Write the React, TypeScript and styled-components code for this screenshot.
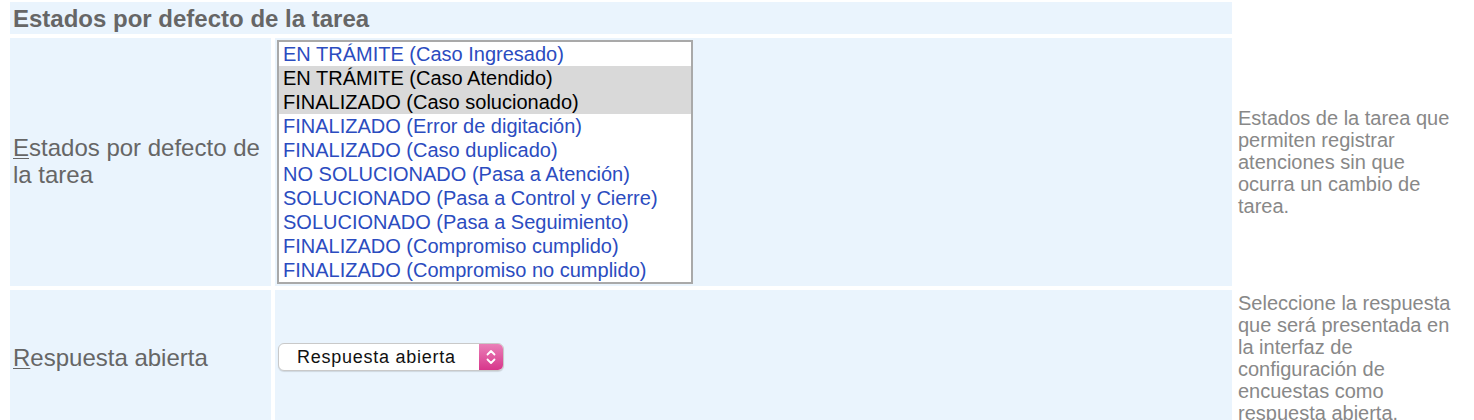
import React from "react";
import styled, { createGlobalStyle } from "styled-components";

const GlobalStyle = createGlobalStyle`
  html, body {
    margin: 0;
    padding: 0;
    background: #ffffff;
    font-family: "Liberation Sans", Arial, Helvetica, sans-serif;
  }
`;

const Form = styled.div`
  display: grid;
  grid-template-columns: 261px 957px 226px;
  grid-template-rows: 32px auto auto;
  column-gap: 4px;
  row-gap: 4px;
  padding: 2px 0 0 10px;
`;

const HeaderCell = styled.div`
  grid-column: 1 / span 2;
  background: #eaf4fd;
  display: flex;
  align-items: center;
  padding: 1px 3px 0;
  font-size: 24px;
  font-weight: bold;
  color: #666666;
`;

const HeaderSpacer = styled.div``;

const LabelCell = styled.label`
  background: #eaf4fd;
  display: flex;
  align-items: center;
  padding: 2px 3px;
  font-size: 24px;
  color: #666666;
  line-height: 1.12;
`;

const AccessKey = styled.span`
  text-decoration: underline;
  text-underline-offset: 2px;
  text-decoration-thickness: 1px;
`;

const FieldCell = styled.div`
  background: #eaf4fd;
  display: flex;
  align-items: center;
  padding: 2px;
`;

const HelpCell = styled.div`
  display: flex;
  align-items: center;
  padding: 2px;
  font-size: 20px;
  color: #888888;
  line-height: 22px;
`;

const ListBox = styled.div`
  width: 412px;
  border: 2px solid #a9a9a9;
  background: #ffffff;
  display: flex;
  flex-direction: column;
`;

const Option = styled.div<{ $selected?: boolean }>`
  height: 24px;
  line-height: 24px;
  padding: 0 4px;
  font-size: 20px;
  white-space: nowrap;
  color: ${(p) => (p.$selected ? "#000000" : "#2b4cc0")};
  background: ${(p) => (p.$selected ? "#d9d9d9" : "transparent")};
`;

const PopupButton = styled.div`
  display: flex;
  align-items: stretch;
  width: 226px;
  height: 28px;
  box-sizing: border-box;
  border: 1px solid #c9c9c9;
  border-radius: 6px;
  background: #ffffff;
  box-shadow: 0 1px 1px rgba(0, 0, 0, 0.12);
  overflow: hidden;
  margin: 0 0 2px 1px;
`;

const PopupLabel = styled.div`
  flex: 1;
  display: flex;
  align-items: center;
  padding-left: 18px;
  font-size: 18px;
  letter-spacing: 0.75px;
  color: #111111;
`;

const PopupArrow = styled.div`
  width: 24px;
  display: flex;
  align-items: center;
  justify-content: center;
  background: linear-gradient(#ea80b8, #d7368b);
`;

const Chevrons = () => (
  <svg width="12" height="18" viewBox="0 0 12 18" fill="none">
    <path d="M2.5 6.5 L6 3 L9.5 6.5" stroke="#ffffff" strokeWidth="1.8" strokeLinecap="round" strokeLinejoin="round" />
    <path d="M2.5 11.5 L6 15 L9.5 11.5" stroke="#ffffff" strokeWidth="1.8" strokeLinecap="round" strokeLinejoin="round" />
  </svg>
);

const estados = [
  { text: "EN TRÁMITE (Caso Ingresado)", selected: false },
  { text: "EN TRÁMITE (Caso Atendido)", selected: true },
  { text: "FINALIZADO (Caso solucionado)", selected: true },
  { text: "FINALIZADO (Error de digitación)", selected: false },
  { text: "FINALIZADO (Caso duplicado)", selected: false },
  { text: "NO SOLUCIONADO (Pasa a Atención)", selected: false },
  { text: "SOLUCIONADO (Pasa a Control y Cierre)", selected: false },
  { text: "SOLUCIONADO (Pasa a Seguimiento)", selected: false },
  { text: "FINALIZADO (Compromiso cumplido)", selected: false },
  { text: "FINALIZADO (Compromiso no cumplido)", selected: false },
];

export default function App() {
  return (
    <>
      <GlobalStyle />
      <Form>
        <HeaderCell>Estados por defecto de la tarea</HeaderCell>
        <HeaderSpacer />

        <LabelCell>
          <span>
            <AccessKey>E</AccessKey>stados por defecto de la tarea
          </span>
        </LabelCell>
        <FieldCell>
          <ListBox role="listbox" aria-multiselectable="true">
            {estados.map((e) => (
              <Option key={e.text} role="option" aria-selected={e.selected} $selected={e.selected}>
                {e.text}
              </Option>
            ))}
          </ListBox>
        </FieldCell>
        <HelpCell>
          Estados de la tarea que permiten registrar atenciones sin que ocurra un cambio de tarea.
        </HelpCell>

        <LabelCell>
          <span>
            <AccessKey>R</AccessKey>espuesta abierta
          </span>
        </LabelCell>
        <FieldCell>
          <PopupButton role="combobox">
            <PopupLabel>Respuesta abierta</PopupLabel>
            <PopupArrow>
              <Chevrons />
            </PopupArrow>
          </PopupButton>
        </FieldCell>
        <HelpCell>
          Seleccione la respuesta que será presentada en la interfaz de configuración de encuestas como respuesta abierta.
        </HelpCell>
      </Form>
    </>
  );
}
